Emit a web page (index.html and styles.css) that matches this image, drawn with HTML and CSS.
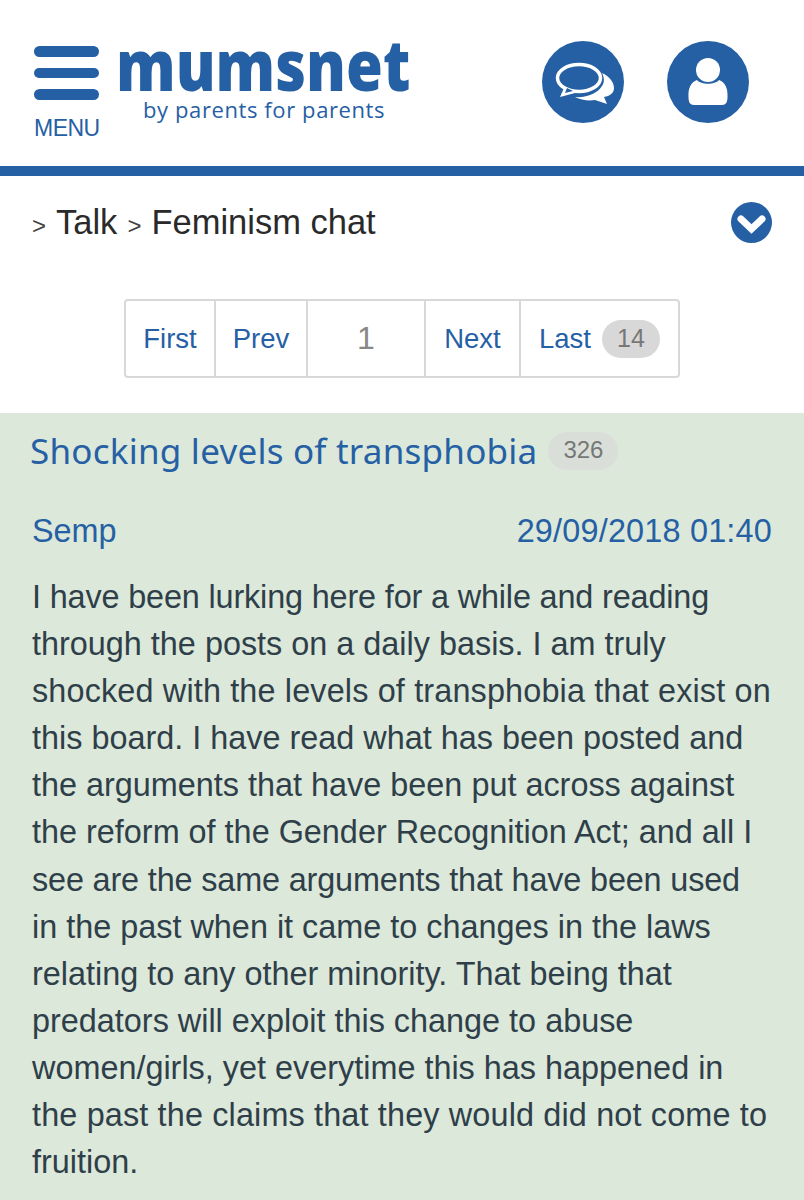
FILE: index.html
```html
<!DOCTYPE html>
<html lang="en">
<head>
<meta charset="utf-8">
<title>Mumsnet</title>
<link rel="stylesheet" href="styles.css">
</head>
<body>
<header class="site-header">
  <div class="menu">
    <div class="burger"><span></span><span></span><span></span></div>
    <div class="menu-label">MENU</div>
  </div>
  <div class="logo">
    <div class="logo-name">mumsnet</div>
    <div class="logo-tag">by parents for parents</div>
  </div>
  <div class="header-actions">
    <div class="round-btn">
      <svg width="64" height="50" viewBox="0 0 64 50" aria-hidden="true">
        <path d="M51 16C58 19 63 25 63 31C63 36 59 39 53 40L56 47L44 43C37 44 30 43 24 40C36 41 47 36 51 29C54 25 53 20 51 16Z" fill="#fff"/>
        <path d="M13 31L9 40L24 36Z" fill="#fff"/>
        <ellipse cx="28" cy="21" rx="21.500" ry="13.500" fill="#2660a4" stroke="#fff" stroke-width="3.500"/>
        <path d="M16 31L14 36L22 34Z" fill="#2660a4"/>
      </svg>
    </div>
    <div class="round-btn">
      <svg width="44" height="50" viewBox="0 0 44 50" aria-hidden="true">
        <circle cx="22" cy="13" r="12" fill="#fff"/>
        <path d="M11 23C15 28 29 28 33 23C39 25 42 31 41.500 40C41.500 45 40 48 36 48H8C4 48 2.500 45 2.500 40C2 31 5 25 11 23Z" fill="#fff"/>
      </svg>
    </div>
  </div>
</header>
<div class="rule"></div>
<nav class="crumbs">
  <div class="crumb-list">
    <span class="sep">&gt;</span><span>Talk</span><span class="sep">&gt;</span><span>Feminism chat</span>
  </div>
  <svg class="chevron" width="41" height="41" viewBox="0 0 41 41" aria-hidden="true">
    <circle cx="20.500" cy="20.500" r="20.500" fill="#2660a4"/>
    <path d="M10 17L20.500 27L31 17" fill="none" stroke="#fff" stroke-width="7" stroke-linecap="round" stroke-linejoin="miter"/>
  </svg>
</nav>
<div class="pager-wrap">
  <div class="pager">
    <a class="page first">First</a>
    <a class="page prev">Prev</a>
    <span class="page current">1</span>
    <a class="page next">Next</a>
    <a class="page last">Last <span class="count">14</span></a>
  </div>
</div>
<main class="post">
  <h1 class="title"><span class="title-text">Shocking levels of transphobia</span><span class="title-count">326</span></h1>
  <div class="meta"><span class="author">Semp</span><span class="date">29/09/2018 01:40</span></div>
  <p class="body">
    <span class="line tight">I have been lurking here for a while and reading</span>
    <span class="line">through the posts on a daily basis. I am truly</span>
    <span class="line loose">shocked with the levels of transphobia that exist on</span>
    <span class="line">this board. I have read what has been posted and</span>
    <span class="line">the arguments that have been put across against</span>
    <span class="line">the reform of the Gender Recognition Act; and all I</span>
    <span class="line tight">see are the same arguments that have been used</span>
    <span class="line">in the past when it came to changes in the laws</span>
    <span class="line">relating to any other minority. That being that</span>
    <span class="line">predators will exploit this change to abuse</span>
    <span class="line">women/girls, yet everytime this has happened in</span>
    <span class="line loose">the past the claims that they would did not come to</span>
    <span class="line">fruition.</span>
  </p>
</main>
</body>
</html>
```
FILE: styles.css
```css
html, body {
  margin: 0;
  padding: 0;
  background: #fff;
  height: 1200px;
  overflow: hidden;
}
body {
  font-family: "Liberation Sans", Arial, sans-serif;
  color: #2660a4;
}
.site-header {
  height: 166px;
  display: flex;
  align-items: flex-start;
  padding-left: 34px;
  box-sizing: border-box;
}
.menu {
  width: 65px;
  padding-top: 46px;
}
.burger {
  display: flex;
  flex-direction: column;
  gap: 11px;
}
.burger span {
  display: block;
  height: 10.500px;
  border-radius: 6px;
  background: #2660a4;
}
.menu-label {
  margin-top: 15px;
  font-size: 23px;
  line-height: 26px;
  letter-spacing: -0.5px;
  text-align: center;
}
.logo {
  margin-left: 19px;
  padding-top: 34px;
  width: 296px;
}
.logo-name {
  font-family: "Open Sans", sans-serif;
  font-weight: 800;
  font-size: 71px;
  line-height: 60px;
  white-space: nowrap;
  transform: scaleX(0.84);
  transform-origin: left center;
  margin-left: -2px;
}
.logo-tag {
  margin-top: 2px;
  margin-left: 25px;
  font-family: "Open Sans", sans-serif;
  font-size: 22px;
  line-height: 26px;
  letter-spacing: 0.6px;
  white-space: nowrap;
}
.header-actions {
  margin-left: 128px;
  padding-top: 41px;
  display: flex;
  gap: 43px;
}
.round-btn {
  width: 82px;
  height: 82px;
  border-radius: 50%;
  background: #2660a4;
  display: flex;
  align-items: center;
  justify-content: center;
}
.rule {
  height: 10px;
  background: #2660a4;
}
.crumbs {
  height: 93px;
  padding: 0 32px;
  display: flex;
  align-items: center;
  justify-content: space-between;
  color: #2a2a2a;
  font-size: 34.500px;
}
.crumb-list {
  display: flex;
  align-items: baseline;
  gap: 10px;
}
.sep {
  font-size: 24px;
  color: #444;
}
.pager-wrap {
  padding: 30px 0 0 124px;
  height: 144px;
  box-sizing: border-box;
}
.pager {
  display: inline-flex;
  height: 79px;
  box-sizing: border-box;
  border: 2px solid #d8d8d8;
  border-radius: 4px;
  font-size: 27.500px;
  line-height: 75px;
}
.page {
  display: block;
  box-sizing: border-box;
  text-align: center;
  border-right: 2px solid #d8d8d8;
}
.first { width: 90px; }
.prev { width: 92px; }
.current { width: 118px; color: #888; font-size: 32px; }
.next { width: 95px; }
.last { width: 157px; border-right: 0; display: flex; align-items: center; gap: 11px; padding-left: 18px; }
.count {
  width: 58px;
  height: 38px;
  line-height: 36px;
  border-radius: 19px;
  background: #d8d8d8;
  color: #777;
  font-size: 25px;
  text-align: center;
}
.post {
  background: #dce8d9;
  height: 787px;
  padding: 14px 32px 0 32px;
  box-sizing: border-box;
}
.title {
  margin: 0 0 0 -2px;
  display: flex;
  align-items: center;
  gap: 11px;
  font-family: "Noto Sans", sans-serif;
  font-weight: 400;
  font-size: 35px;
  line-height: 48px;
}
.title-text {
  letter-spacing: 0.23px;
}
.title-count {
  width: 70px;
  height: 38px;
  border-radius: 19px;
  background: #d9dfd8;
  color: #777;
  font-family: "Liberation Sans", sans-serif;
  font-size: 24px;
  line-height: 36px;
  text-align: center;
}
.meta {
  margin-top: 38px;
  display: flex;
  justify-content: space-between;
  font-size: 32.400px;
  line-height: 36px;
}
.date {
  letter-spacing: 0.2px;
}
.body {
  margin: 25px 0 0;
  color: #2f3f4a;
  font-size: 32.400px;
  line-height: 47.100px;
  white-space: nowrap;
}
.line {
  display: block;
}
.tight {
  letter-spacing: -0.15px;
}
.loose {
  letter-spacing: 0.15px;
}
```
